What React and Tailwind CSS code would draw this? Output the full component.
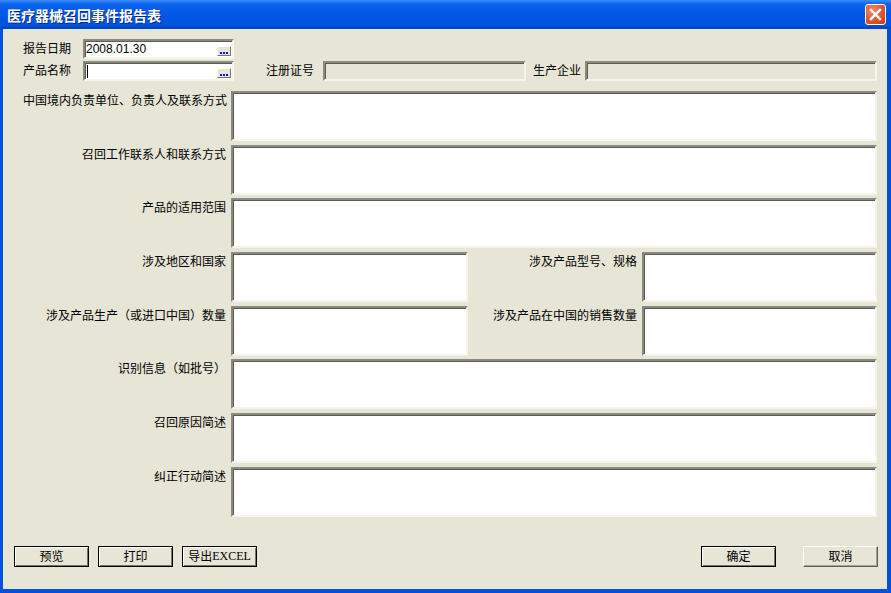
import React from "react";

const cjk = { fontFamily: '"Noto Sans CJK SC", "Liberation Sans", sans-serif' };

// sunken 3D field, used for inputs and the big text boxes
const sunken =
  "border-2 border-t-[#8b8a80] border-l-[#8b8a80] border-b-[#f5f5ef] border-r-[#f5f5ef] shadow-[inset_1px_1px_0_#5c5b54]";

function Label({ children, className = "" }) {
  return (
    <div className={`text-[12px] leading-[14px] text-black whitespace-nowrap ${className}`} style={cjk}>
      {children}
    </div>
  );
}

function PickInput({ value }) {
  return (
    <div className={`relative w-[151px] h-[20px] bg-white ${sunken}`}>
      <div className="pl-[1px] text-[12px] leading-[16px] text-black" style={{ fontFamily: '"Liberation Sans", sans-serif' }}>
        {value ? value : <span className="inline-block w-[1px] h-[13px] bg-black align-middle ml-[1px]" />}
      </div>
      <div className="absolute right-[1px] top-[5px] w-[14px] h-[10px] bg-[#e6e5d6] border border-t-white border-l-white border-b-[#77766c] border-r-[#77766c] flex items-end justify-center pb-[1px]">
        <span className="flex gap-[1px]">
          <span className="w-[2px] h-[2px] bg-[#0018c8]" />
          <span className="w-[2px] h-[2px] bg-[#0018c8]" />
          <span className="w-[2px] h-[2px] bg-[#0018c8]" />
        </span>
      </div>
    </div>
  );
}

function Box({ className = "" }) {
  return <div className={`h-[50px] bg-white ${sunken} ${className}`} />;
}

function Row({ label, children }) {
  return (
    <div className="flex">
      <Label className="w-[203px] text-right pt-[2px]">{label}</Label>
      <div className="flex flex-1 ml-[5px]">{children}</div>
    </div>
  );
}

function Btn({ children, dflt = true }) {
  return (
    <button
      className={`w-[75px] h-[21px] bg-[#e6e5d6] text-[12px] leading-[14px] text-black flex items-center justify-center ${
        dflt
          ? "border border-black shadow-[inset_1px_1px_0_#fff,inset_-1px_-1px_0_#77766c]"
          : "border border-t-white border-l-white border-b-[#5f5e57] border-r-[#5f5e57] shadow-[inset_-1px_-1px_0_#a3a296]"
      }`}
      style={cjk}
    >
      {children}
    </button>
  );
}

export default function App() {
  return (
    <div className="w-[891px] h-[593px] flex flex-col bg-[#0050dc] overflow-hidden">
      {/* Title bar */}
      <div className="h-[29px] shrink-0 flex items-center justify-between pl-[7px] pr-[5px] bg-[linear-gradient(to_bottom,#3c8ef7_0%,#0b62ec_14%,#0058e6_50%,#0054df_85%,#0043c6_100%)]">
        <div
          className="text-white font-bold text-[14px] leading-[16px] [text-shadow:1px_1px_0_#0a2a80]"
          style={cjk}
        >
          医疗器械召回事件报告表
        </div>
        <div className="w-[21px] h-[21px] rounded-[3px] border border-white bg-[radial-gradient(circle_at_35%_30%,#f08a6a_0%,#e05530_55%,#c23a17_100%)] flex items-center justify-center">
          <svg width="13" height="13" viewBox="0 0 13 13">
            <path d="M2 2 L11 11 M11 2 L2 11" stroke="white" strokeWidth="2.4" strokeLinecap="square" />
          </svg>
        </div>
      </div>

      {/* Body */}
      <div className="flex-1 ml-[3px] mr-[4px] mb-[4px] bg-[#e6e5d6] flex flex-col pt-[10px]">
        <div className="pl-[20px] pr-[10px]">
          <div className="flex items-center">
            <Label className="w-[60px] pb-[2px]">报告日期</Label>
            <PickInput value="2008.01.30" />
          </div>
          <div className="flex items-center mt-[2px]">
            <Label className="w-[60px] pb-[2px]">产品名称</Label>
            <PickInput />
            <Label className="ml-[32px] w-[57px] pb-[2px]">注册证号</Label>
            <div className={`w-[203px] h-[20px] ${sunken}`} />
            <Label className="ml-[7px] w-[52px] pb-[2px]">生产企业</Label>
            <div className={`flex-1 h-[20px] ${sunken}`} />
          </div>
        </div>

        <div className="mt-[10px] pl-[20px] pr-[10px] flex flex-col gap-[3.7px]">
          <Row label="中国境内负责单位、负责人及联系方式">
            <Box className="flex-1" />
          </Row>
          <Row label="召回工作联系人和联系方式">
            <Box className="flex-1" />
          </Row>
          <Row label="产品的适用范围">
            <Box className="flex-1" />
          </Row>
          <Row label="涉及地区和国家">
            <Box className="w-[237px]" />
            <Label className="w-[169px] text-right pt-[2px]">涉及产品型号、规格</Label>
            <Box className="flex-1 ml-[5px]" />
          </Row>
          <Row label="涉及产品生产（或进口中国）数量">
            <Box className="w-[237px]" />
            <Label className="w-[169px] text-right pt-[2px]">涉及产品在中国的销售数量</Label>
            <Box className="flex-1 ml-[5px]" />
          </Row>
          <Row label="识别信息（如批号）">
            <Box className="flex-1" />
          </Row>
          <Row label="召回原因简述">
            <Box className="flex-1" />
          </Row>
          <Row label="纠正行动简述">
            <Box className="flex-1" />
          </Row>
        </div>

        <div className="mt-[29px] pl-[11px] pr-[9px] flex items-center">
          <div className="flex gap-[9px]">
            <Btn>预览</Btn>
            <Btn>打印</Btn>
            <Btn>
              导出<span style={{ fontFamily: '"Liberation Serif", serif' }}>EXCEL</span>
            </Btn>
          </div>
          <div className="ml-auto flex gap-[27px]">
            <Btn>确定</Btn>
            <Btn dflt={false}>取消</Btn>
          </div>
        </div>
      </div>
    </div>
  );
}
